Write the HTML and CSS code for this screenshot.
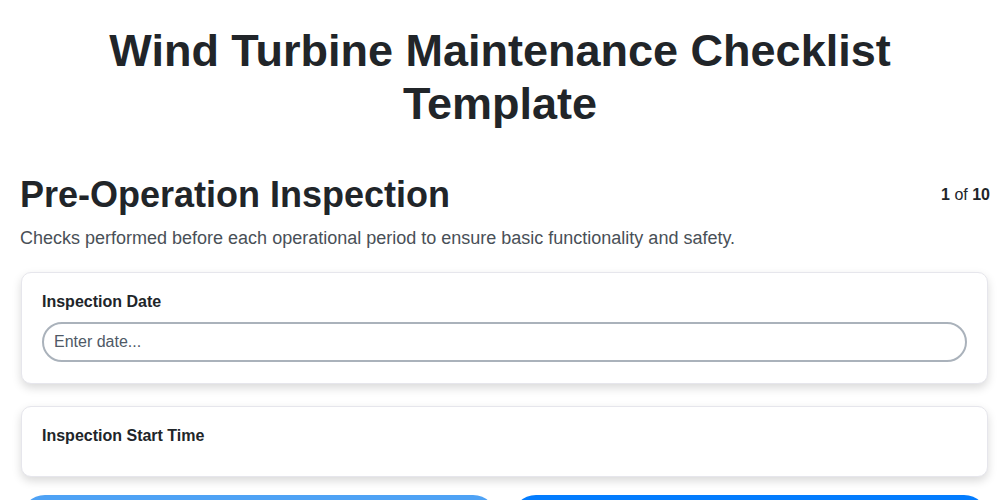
FILE: index.html
```html
<!DOCTYPE html>
<html lang="en">
<head>
<meta charset="utf-8">
<title>Wind Turbine Maintenance Checklist Template</title>
<link rel="stylesheet" href="styles.css">
</head>
<body>
  <h1 class="title">Wind Turbine Maintenance Checklist Template</h1>
  <main class="content">
    <div class="section-head">
      <h2 class="section-title">Pre-Operation Inspection</h2>
      <div class="pager"><b>1</b> of <b>10</b></div>
    </div>
    <p class="section-desc">Checks performed before each operational period to ensure basic functionality and safety.</p>
    <div class="card">
      <label class="field-label" for="date">Inspection Date</label>
      <input class="field-input" id="date" type="text" placeholder="Enter date...">
    </div>
    <div class="card card-empty">
      <label class="field-label">Inspection Start Time</label>
    </div>
    <div class="actions">
      <button class="btn btn-light" type="button">Previous</button>
      <button class="btn btn-primary" type="button">Next</button>
    </div>
  </main>
</body>
</html>
```

FILE: styles.css
```css
* { box-sizing: border-box; }
html, body { margin: 0; padding: 0; background: #ffffff; }
body {
  font-family: "Liberation Sans", Arial, sans-serif;
  color: #212529;
  width: 1000px;
}
.title {
  margin: 24px 80px 0;
  font-size: 45px;
  line-height: 53px;
  font-weight: 700;
  text-align: center;
}
.content {
  margin: 0 12px 0 21px;
  padding-top: 43px;
}
.section-head {
  display: flex;
  align-items: center;
  justify-content: space-between;
  margin-left: -1px;
}
.section-title {
  margin: 0;
  font-size: 36px;
  line-height: 44px;
  font-weight: 700;
}
.pager {
  font-size: 16px;
  margin-right: -2px;
}
.section-desc {
  margin: 9px 0 22px -1px;
  font-size: 18px;
  line-height: 24px;
  color: #495057;
}
.card {
  background: #fff;
  border: 1px solid #e6e6ec;
  border-radius: 10px;
  padding: 19px 20px 21px;
  box-shadow: 0 4px 10px rgba(0, 0, 0, 0.15);
  margin-bottom: 22px;
  display: flex;
  flex-direction: column;
}
.card-empty { padding-bottom: 20px; }
.field-label {
  font-size: 16px;
  line-height: 20px;
  font-weight: 700;
  margin-bottom: 10px;
}
.field-input {
  height: 40px;
  border: 2px solid #aab2bb;
  border-radius: 20px;
  padding: 0 10px;
  font-family: inherit;
  font-size: 16px;
  color: #212529;
  outline: none;
}
.field-input::placeholder { color: #4f5966; opacity: 1; }
.actions {
  display: flex;
  gap: 15px;
  margin-top: -4px;
}
.btn {
  flex: 1;
  height: 48px;
  border: none;
  border-radius: 24px;
  font-family: inherit;
  font-size: 16px;
  font-weight: 700;
  color: #fff;
}
.btn-light { background: #4ea2f5; }
.btn-primary { background: #037cfe; }
```
